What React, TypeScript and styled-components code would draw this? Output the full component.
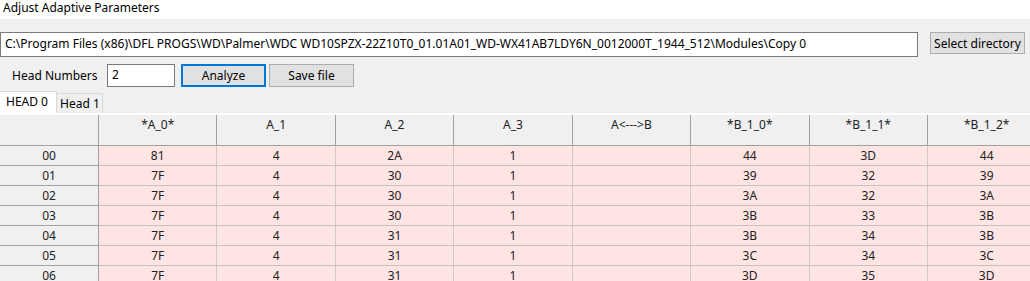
import React from "react";
import styled, { createGlobalStyle } from "styled-components";

const Global = createGlobalStyle`
  html, body { margin: 0; padding: 0; }
  body {
    background: #f0f0f0;
    font-family: "Segoe UI", "Noto Sans", "Open Sans", sans-serif;
    font-size: 12px;
    color: #000;
    overflow: hidden;
  }
`;

const Window = styled.div`
  width: 1030px;
  height: 281px;
  overflow: hidden;
  background: #f0f0f0;
`;

const TitleBar = styled.div`
  height: 19px;
  background: #fff;
  padding-left: 3px;
  line-height: 15px;
  white-space: nowrap;
`;

const PathRow = styled.div`
  display: flex;
  align-items: flex-start;
  gap: 12px;
  margin-top: 13px;
`;

const PathInput = styled.div`
  box-sizing: border-box;
  width: 918px;
  height: 25px;
  background: #fff;
  border: 1px solid #7a7a7a;
  padding: 0 4px;
  line-height: 21px;
  white-space: nowrap;
  overflow: hidden;
`;

const Button = styled.div<{ $width: number; $height: number; $focused?: boolean }>`
  box-sizing: border-box;
  width: ${(p) => p.$width}px;
  height: ${(p) => p.$height}px;
  background: #e1e1e1;
  border: 1px solid ${(p) => (p.$focused ? "#0078d7" : "#adadad")};
  box-shadow: ${(p) => (p.$focused ? "inset 0 0 0 1px #0078d7" : "none")};
  display: flex;
  align-items: center;
  justify-content: center;
  white-space: nowrap;
`;

const ControlsRow = styled.div`
  display: flex;
  align-items: center;
  margin-top: 7px;
  padding-left: 12px;
`;

const Label = styled.span`
  width: 95px;
  white-space: nowrap;
`;

const NumberInput = styled.div`
  box-sizing: border-box;
  width: 68px;
  height: 23px;
  background: #fff;
  border: 1px solid #7a7a7a;
  padding: 0 4px;
  line-height: 19px;
  margin-right: 6px;
`;

const ButtonGap = styled.div`
  display: flex;
  gap: 3px;
`;

const TabStrip = styled.div`
  display: flex;
  align-items: flex-end;
  height: 22px;
  margin-top: 4px;
`;

const Tab = styled.div<{ $active?: boolean }>`
  box-sizing: border-box;
  height: ${(p) => (p.$active ? 22 : 20)}px;
  padding: 0 ${(p) => (p.$active ? 6 : 3)}px;
  background: ${(p) => (p.$active ? "#fff" : "#f0f0f0")};
  border: 1px solid #d9d9d9;
  border-bottom: none;
  border-left: none;
  line-height: 20px;
  white-space: nowrap;
  width: ${(p) => (p.$active ? 57 : 46)}px;
`;

const Page = styled.div`
  background: #fff;
  padding-top: 2px;
`;

const Grid = styled.div`
  display: grid;
  grid-template-columns: 99px repeat(8, 118.43px);
`;

const HeaderCell = styled.div`
  box-sizing: border-box;
  height: 31px;
  background: #f0f0f0;
  border-right: 1px solid #a0a0a0;
  border-bottom: 1px solid #a0a0a0;
  text-align: center;
  padding-top: 2px;
  line-height: 16px;
  white-space: nowrap;
  color: #222;
`;

const RowHeader = styled.div`
  box-sizing: border-box;
  height: 20px;
  background: #f0f0f0;
  border-right: 1px solid #a0a0a0;
  border-bottom: 1px solid #a0a0a0;
  text-align: center;
  line-height: 20px;
  color: #222;
`;

const Cell = styled.div`
  box-sizing: border-box;
  height: 20px;
  background: #ffe4e4;
  border-right: 1px solid #d0c8c8;
  border-bottom: 1px solid #c8c0c0;
  text-align: center;
  line-height: 20px;
  color: #222;
`;

const columns = ["*A_0*", "A_1", "A_2", "A_3", "A<--->B", "*B_1_0*", "*B_1_1*", "*B_1_2*"];

const rows: [string, string[]][] = [
  ["00", ["81", "4", "2A", "1", "", "44", "3D", "44"]],
  ["01", ["7F", "4", "30", "1", "", "39", "32", "39"]],
  ["02", ["7F", "4", "30", "1", "", "3A", "32", "3A"]],
  ["03", ["7F", "4", "30", "1", "", "3B", "33", "3B"]],
  ["04", ["7F", "4", "31", "1", "", "3B", "34", "3B"]],
  ["05", ["7F", "4", "31", "1", "", "3C", "34", "3C"]],
  ["06", ["7F", "4", "31", "1", "", "3D", "35", "3D"]],
];

export default function App() {
  return (
    <Window>
      <Global />
      <TitleBar>Adjust Adaptive Parameters</TitleBar>
      <PathRow>
        <PathInput>
          C:\Program Files (x86)\DFL PROGS\WD\Palmer\WDC WD10SPZX-22Z10T0_01.01A01_WD-WX41AB7LDY6N_0012000T_1944_512\Modules\Copy 0
        </PathInput>
        <Button $width={95} $height={22}>Select directory</Button>
      </PathRow>
      <ControlsRow>
        <Label>Head Numbers</Label>
        <NumberInput>2</NumberInput>
        <ButtonGap>
          <Button $width={85} $height={23} $focused>Analyze</Button>
          <Button $width={85} $height={23}>Save file</Button>
        </ButtonGap>
      </ControlsRow>
      <TabStrip>
        <Tab $active>HEAD 0</Tab>
        <Tab>Head 1</Tab>
      </TabStrip>
      <Page>
        <Grid>
          <HeaderCell />
          {columns.map((c) => (
            <HeaderCell key={c}>{c}</HeaderCell>
          ))}
          {rows.map(([name, vals]) => (
            <React.Fragment key={name}>
              <RowHeader>{name}</RowHeader>
              {vals.map((v, i) => (
                <Cell key={i}>{v}</Cell>
              ))}
            </React.Fragment>
          ))}
        </Grid>
      </Page>
    </Window>
  );
}
